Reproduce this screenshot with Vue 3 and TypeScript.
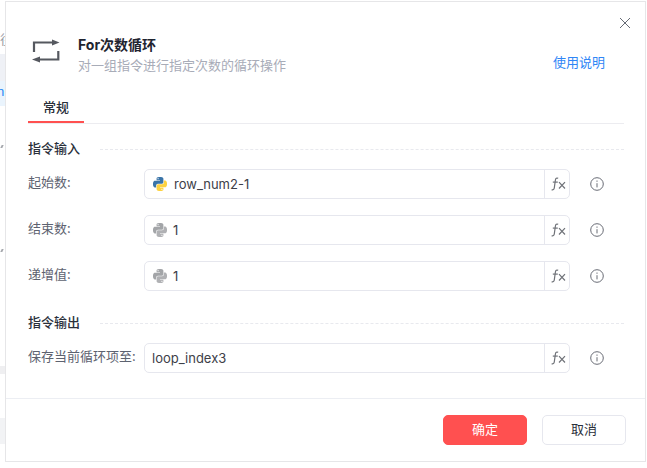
<script setup lang="ts">
interface Field {
  label: string
  value: string
  py: 'on' | 'off' | null
}

const inputs: Field[] = [
  { label: '起始数:', value: 'row_num2-1', py: 'on' },
  { label: '结束数:', value: '1', py: 'off' },
  { label: '递增值:', value: '1', py: 'off' },
]
const outputs: Field[] = [{ label: '保存当前循环项至:', value: 'loop_index3', py: null }]

const sections = [
  { title: '指令输入', fields: inputs },
  { title: '指令输出', fields: outputs },
]
</script>

<template>
  <div class="page">
    <!-- bits of the page behind the dialog -->
    <div class="backdrop">
      <span class="bd-a" />
      <span class="bd-a2"><b>n</b></span>
      <span class="bd-b" />
      <span class="bd-c" />
      <span class="bd-glyph bd-glyph--1">往</span>
      <span class="bd-tick bd-tick--1" />
      <span class="bd-tick bd-tick--2" />
    </div>
    <div class="dialog">
      <button class="close" type="button" aria-label="关闭">
        <svg viewBox="0 0 12 12" width="12" height="12" fill="none" stroke="#666b75" stroke-width="1">
          <path d="M1 1l10 10M11 1L1 11" />
        </svg>
      </button>

      <header class="head">
        <svg class="loop-icon" viewBox="0 0 30 26" width="30" height="26" fill="none" stroke="#55585f" stroke-width="2.200">
          <path d="M3 14V4.500H23" />
          <path d="M27.300 13V21.500H7" />
          <path d="M21 1.500L28.500 4.500 21 7.500z" fill="#55585f" stroke="none" />
          <path d="M9 18.500L1 21.500 9 24.500z" fill="#55585f" stroke="none" />
        </svg>
        <div class="head-text">
          <div class="title">For次数循环</div>
          <div class="desc">对一组指令进行指定次数的循环操作</div>
        </div>
        <a class="help">使用说明</a>
      </header>

      <div class="tabs">
        <span class="tab">常规</span>
      </div>

      <div class="body">
        <section v-for="s in sections" :key="s.title" class="section">
          <div class="section-title">
            <span>{{ s.title }}</span>
            <i class="dash" />
          </div>
          <div v-for="f in s.fields" :key="f.label" class="row">
            <label class="label">{{ f.label }}</label>
            <div class="input" :class="{ 'input--plain': !f.py }">
              <svg v-if="f.py" class="py" :class="{ 'py--tight': f.py === 'off' }" viewBox="0 0 24 24" width="14" height="14">
                <path
                  :fill="f.py === 'on' ? '#3a74a8' : '#a3a5a8'"
                  d="M14.250.180l.900.200.730.260.590.300.450.320.340.340.250.340.160.330.100.300.040.260.020.200-.010.130V8.500l-.050.630-.130.550-.210.460-.260.380-.300.310-.330.250-.350.190-.350.140-.330.100-.300.070-.260.040-.210.020H8.770l-.690.050-.590.140-.500.220-.410.270-.330.320-.270.350-.200.360-.150.370-.100.350-.070.320-.040.270-.020.210v3.060H3.170l-.210-.030-.280-.070-.320-.120-.350-.180-.360-.260-.360-.360-.350-.460-.320-.590-.280-.730-.210-.880-.140-1.050-.050-1.230.060-1.220.160-1.040.240-.870.320-.710.360-.570.400-.440.420-.330.420-.240.400-.160.360-.100.320-.050.240-.010h.160l.060.010h8.160v-.830H6.180l-.010-2.750-.020-.370.050-.340.110-.310.170-.280.250-.260.310-.230.380-.200.440-.180.510-.150.580-.120.640-.100.710-.060.770-.040.840-.020 1.270.050zm-6.300 1.980l-.230.330-.080.410.080.410.230.340.330.220.410.090.410-.090.330-.220.230-.340.080-.410-.080-.410-.230-.330-.330-.220-.410-.090-.410.090z"
                />
                <path
                  :fill="f.py === 'on' ? '#fdd240' : '#b0b1b4'"
                  d="M21.040 6.110l.280.060.320.120.350.180.360.270.360.350.350.470.320.590.280.730.210.880.140 1.040.050 1.230-.060 1.230-.160 1.040-.240.860-.320.710-.360.570-.400.450-.420.330-.420.240-.400.160-.360.090-.320.050-.240.020-.160-.010h-8.220v.820h5.840l.010 2.760.020.360-.050.340-.110.310-.170.290-.250.250-.310.240-.380.200-.440.170-.510.150-.580.130-.640.090-.710.070-.770.040-.840.010-1.270-.040-1.070-.140-.900-.200-.730-.250-.590-.300-.450-.330-.340-.340-.250-.340-.160-.330-.100-.300-.040-.250-.020-.200.010-.130v-5.340l.050-.640.130-.540.210-.460.260-.380.300-.320.330-.240.350-.200.350-.140.330-.100.300-.060.260-.040.210-.020.130-.010h5.840l.690-.050.590-.140.500-.210.410-.280.330-.320.270-.350.200-.360.150-.360.100-.350.070-.320.040-.280.020-.210V6.070h2.090l.140.010zm-6.470 14.250l-.230.330-.080.410.080.410.230.330.330.230.410.080.410-.080.330-.230.230-.330.080-.410-.080-.410-.230-.330-.330-.230-.410-.080-.410.080z"
                />
              </svg>
              <span class="value">{{ f.value }}</span>
              <span class="fx">
                <svg viewBox="0 0 15 14" width="15" height="14" fill="none" stroke="#6f7278" stroke-width="1.200">
                  <path d="M7.200 1.300C5.600.6 4.700 1.300 4.400 3L3.300 10.800C3 12.600 2 13.200.6 12.700" />
                  <path d="M1.800 5.100H6.800" />
                  <path d="M8 5.200l6 6.300M14 5.200L8 11.500" />
                </svg>
              </span>
            </div>
            <svg class="info" viewBox="0 0 14 14" width="14" height="14" fill="none" stroke="#696c75">
              <circle cx="7" cy="7" r="6.300" />
              <path d="M7 6.200v4.200" />
              <path d="M7 3.500v1.300" />
            </svg>
          </div>
        </section>
      </div>

      <footer class="foot">
        <button class="btn btn--primary" type="button">确定</button>
        <button class="btn" type="button">取消</button>
      </footer>
    </div>
  </div>
</template>

<style scoped>
.page {
  position: relative;
  width: 647px;
  height: 468px;
  overflow: hidden;
  background: #fff;
  font-family: "Noto Sans CJK SC", "Liberation Sans", sans-serif;
}

.backdrop span {
  position: absolute;
  left: 0;
  width: 5px;
  overflow: hidden;
}

.bd-a { top: 54px; height: 27px; background: #eff1f6; }
.bd-a2 { top: 81px; height: 25px; background: #eaf4fd; }
.bd-a2 b {
  position: absolute;
  left: -3px;
  top: 1px;
  font: 400 13px/20px "Liberation Sans", sans-serif;
  color: #1f86f5;
}
.bd-b { top: 366px; height: 8px; background: #efeff1; }
.bd-c { top: 418px; height: 26px; background: #f2f3f5; }
.backdrop .bd-glyph {
  top: 31px;
  height: 16px;
  font-size: 13px;
  line-height: 16px;
  color: #9a9da5;
}
.backdrop .bd-tick {
  left: 1px;
  width: 2px;
  height: 3px;
  background: #a5a8ad;
  transform: skewX(-25deg);
}
.backdrop .bd-tick--1 { top: 145px; }
.backdrop .bd-tick--2 { top: 249px; }

.dialog {
  position: absolute;
  left: 5px;
  top: 1px;
  width: 641px;
  height: 461px;
  box-sizing: border-box;
  display: flex;
  flex-direction: column;
  background: #fff;
  border: 1px solid #e6e6e8;
}

.close {
  position: absolute;
  right: 14px;
  top: 15px;
  display: flex;
  padding: 0;
  border: none;
  background: none;
}

.head {
  display: flex;
  align-items: flex-start;
  height: 90px;
  padding: 35px 40px 0 25px;
  box-sizing: border-box;
  flex: none;
}

.loop-icon {
  flex: none;
  margin-top: 1px;
}

.head-text {
  margin-left: 17px;
  flex: 1;
}

.title {
  font-size: 14px;
  line-height: 16px;
  font-weight: 700;
  color: #1f2430;
  font-family: Inter, "Noto Sans CJK SC", sans-serif;
}

.desc {
  margin-top: 3px;
  font-size: 13px;
  line-height: 17px;
  color: #a8acb8;
}

.help {
  margin-top: 15px;
  font-size: 13px;
  line-height: 20px;
  color: #2f86f6;
}

.tabs {
  flex: none;
  margin: 0 21px 0 22px;
  height: 31px;
  border-bottom: 1px solid #ececf0;
}

.tab {
  display: block;
  width: 56px;
  height: 29px;
  border-bottom: 2px solid #ff5050;
  font-size: 13px;
  line-height: 30px;
  font-weight: 500;
  text-align: center;
  color: #2a2f3a;
}

.body {
  flex: 1;
  padding: 0 21px 0 22px;
}

.section {
  padding-top: 15px;
}

.section + .section {
  padding-top: 22px;
}

.section-title {
  display: flex;
  align-items: center;
  height: 20px;
  font-size: 13px;
  font-weight: 500;
  line-height: 18px;
  color: #2a2f3a;
}

.section-title span {
  margin-top: -2px;
}

.dash {
  flex: 1;
  margin-left: 20px;
  border-top: 1px dashed #e8e9ee;
}

.row {
  display: flex;
  align-items: center;
  margin-top: 16px;
  height: 30px;
}

.section-title + .row {
  margin-top: 10px;
}

.label {
  flex: none;
  width: 116px;
  margin-top: -6px;
  font-size: 13px;
  color: #5d6270;
  white-space: nowrap;
}

.input {
  flex: 1;
  display: flex;
  align-items: center;
  box-sizing: border-box;
  height: 30px;
  padding-left: 8px;
  background: #fff;
  border: 1px solid #e6e7ee;
  border-radius: 5px;
}

.input--plain {
  padding-left: 7px;
}

.py {
  flex: none;
  margin-right: 7px;
}

.py--tight {
  margin-right: 6px;
}

.value {
  flex: 1;
  font-family: Inter, "Liberation Sans", sans-serif;
  font-size: 13px;
  color: #3d4048;
}

.fx {
  flex: none;
  width: 25px;
  height: 100%;
  padding-left: 2px;
  box-sizing: border-box;
  display: flex;
  align-items: center;
  justify-content: center;
  border-left: 1px solid #e6e7ee;
}

.info {
  flex: none;
  margin-left: 20px;
  margin-right: 20px;
}

.foot {
  flex: none;
  display: flex;
  justify-content: flex-end;
  gap: 15px;
  height: 63px;
  padding: 16px 19px 0 0;
  box-sizing: border-box;
  border-top: 1px solid #eceef3;
}

.btn {
  width: 84px;
  height: 30px;
  padding: 0 0 3px;
  background: #fff;
  border: 1px solid #e6e7ee;
  border-radius: 5px;
  font-family: inherit;
  font-size: 13px;
  color: #2a2f3a;
}

.btn--primary {
  background: #ff5050;
  border-color: #ff5050;
  color: #fff;
}
</style>
